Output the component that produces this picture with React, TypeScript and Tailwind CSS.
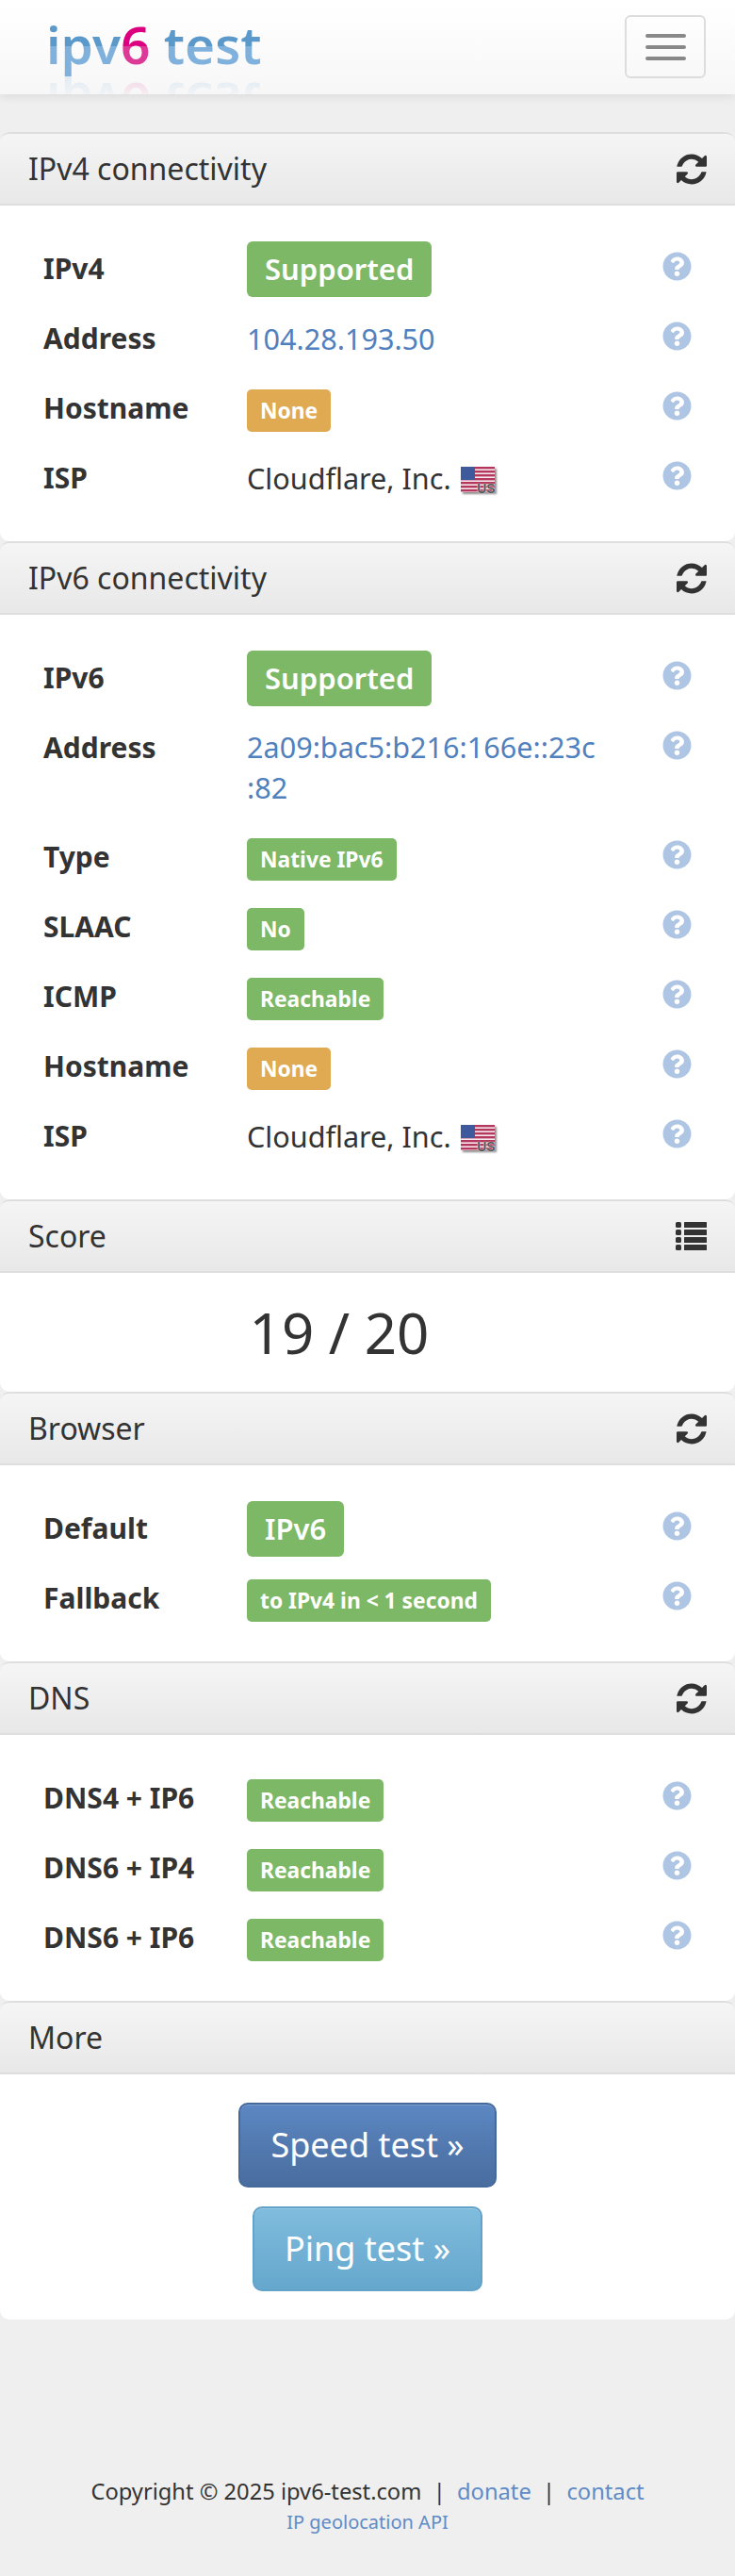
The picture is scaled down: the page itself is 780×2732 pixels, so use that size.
import { FaQuestionCircle } from "react-icons/fa";

const green = "bg-[#7db866]";
const orange = "bg-[#dfaa52]";

function RefreshIcon() {
  return (
    <svg viewBox="128 128 1536 1536" className="h-[33px] w-[32px] fill-[#333]">
      <path d="M1639 1056q0 5-1 7-64 268-268 434.5t-478 166.5q-146 0-282.5-55t-243.5-157l-129 129q-19 19-45 19t-45-19-19-45v-448q0-26 19-45t45-19h448q26 0 45 19t19 45-19 45l-137 137q71 66 161 102t187 36q134 0 250-65t186-179q11-17 53-117 8-23 30-23h192q13 0 22.5 9.5t9.5 22.5zm25-800v448q0 26-19 45t-45 19h-448q-26 0-45-19t-19-45 19-45l138-138q-148-137-349-137-134 0-250 65t-186 179q-11 17-53 117-8 23-30 23h-199q-13 0-22.5-9.5t-9.5-22.5v-7q65-268 270-434.5t480-166.5q146 0 284 55.5t245 156.5l130-129q19-19 45-19t45 19 19 45z" />
    </svg>
  );
}

function ListIcon() {
  return (
    <svg viewBox="0 0 33 30" className="h-[30px] w-[33px] fill-[#333]">
      {[0, 8, 16, 24].map((y) => (
        <g key={y}>
          <rect x="0" y={y} width="6" height="6" rx="1.5" />
          <rect x="9" y={y} width="24" height="6" rx="0.5" />
        </g>
      ))}
    </svg>
  );
}

function Flag() {
  return (
    <span className="relative ml-[10px] inline-block h-[27px] w-[36px] align-[-3px] shadow-[2px_2px_2px_rgba(0,0,0,0.45)]">
      <svg viewBox="0 0 36 27" className="block h-full w-full">
        <rect width="36" height="27" fill="#f3e9ee" />
        {[0, 4, 8, 12, 16, 20, 24].map((y) => (
          <rect key={y} y={y} width="36" height="2.4" fill="#b5375c" />
        ))}
        <rect width="15" height="14" fill="#3f5a9c" />
      </svg>
      <span className="absolute right-[-1px] bottom-[-3px] font-['Liberation_Sans',sans-serif] text-[14px] leading-none font-bold text-[#555] [text-shadow:0_0_1px_#fff,0_0_1px_#fff]">
        US
      </span>
    </span>
  );
}

function Badge({ text, big, color }: { text: string; big?: boolean; color?: string }) {
  if (big) {
    return (
      <span className={`-mt-[7px] -mb-[8px] block w-fit rounded-[6px] ${green} px-[19px] py-[8px] text-[31px] leading-[43px] font-semibold text-white`}>
        {text}
      </span>
    );
  }
  return (
    <span className={`mt-[2px] -mb-[3px] block w-fit rounded-[5px] ${color ?? green} px-[14px] py-[8px] text-[22.8px] leading-[29px] font-bold text-white`}>
      {text}
    </span>
  );
}

function Row({ label, children }: { label: string; children: React.ReactNode }) {
  return (
    <div className="flex items-start py-[15px]">
      <div className="w-[216px] shrink-0 text-[30px] leading-[44px] font-bold text-[#333]">{label}</div>
      <div className="w-[376px] shrink-0 text-[30.6px] leading-[44px] text-[#333]">{children}</div>
      <FaQuestionCircle className="mt-[4px] ml-[65px] shrink-0 text-[#aec6e4]" size={31} />
    </div>
  );
}

function Panel({
  title,
  icon,
  children,
}: {
  title: string;
  icon?: "sync" | "list";
  children: React.ReactNode;
}) {
  return (
    <section className="rounded-[10px] bg-white">
      <header className="flex h-[78px] items-center justify-between rounded-t-[10px] border-y-[2px] border-[#dedede] bg-gradient-to-b from-[#f5f5f5] to-[#e8e8e8] pr-[30px] pl-[30px]">
        <h2 className="text-[32px] leading-[44px] font-normal text-[#333]">{title}</h2>
        {icon === "sync" && <RefreshIcon />}
        {icon === "list" && <ListIcon />}
      </header>
      {children}
    </section>
  );
}

const Rows = ({ children }: { children: React.ReactNode }) => (
  <div className="flex flex-col py-[30px] pl-[46px]">{children}</div>
);

export default function App() {
  return (
    <div className="flex min-h-[2732px] flex-col bg-[#efefef] font-['Noto_Sans',sans-serif]">
      <nav className="flex h-[100px] items-start justify-between overflow-hidden bg-gradient-to-b from-white to-[#f7f7f7] shadow-[0_3px_9px_rgba(0,0,0,0.08)]">
        <div className="mt-[11px] ml-[49px] text-[55px] leading-[72px] font-semibold [-webkit-box-reflect:below_-10px_linear-gradient(transparent_55%,rgba(255,255,255,0.25))]">
          <span className="bg-gradient-to-b from-[#5c99cb] from-[54%] to-[#7fb1dc] to-[54%] bg-clip-text text-transparent">ipv</span>
          <span className="bg-gradient-to-b from-[#dc0080] from-[54%] to-[#dd3a98] to-[54%] bg-clip-text text-transparent">6</span>
          <span className="bg-gradient-to-b from-[#5c99cb] from-[54%] to-[#7fb1dc] to-[54%] bg-clip-text text-transparent"> test</span>
        </div>
        <button className="mt-[16px] mr-[31px] flex h-[67px] w-[86px] flex-col items-center justify-center gap-[8px] rounded-[6px] border-[2px] border-[#dddddd]">
          <span className="h-[4px] w-[43px] rounded-[2px] bg-[#888888]" />
          <span className="h-[4px] w-[43px] rounded-[2px] bg-[#888888]" />
          <span className="h-[4px] w-[43px] rounded-[2px] bg-[#888888]" />
        </button>
      </nav>

      <main className="mt-[40px]">
        <Panel title="IPv4 connectivity" icon="sync">
          <Rows>
            <Row label="IPv4"><Badge text="Supported" big /></Row>
            <Row label="Address"><a className="text-[#5080bd]">104.28.193.50</a></Row>
            <Row label="Hostname"><Badge text="None" color={orange} /></Row>
            <Row label="ISP">Cloudflare, Inc.<Flag /></Row>
          </Rows>
        </Panel>
        <Panel title="IPv6 connectivity" icon="sync">
          <Rows>
            <Row label="IPv6"><Badge text="Supported" big /></Row>
            <Row label="Address">
              <a className="block leading-[43px] whitespace-nowrap text-[#5080bd]">
                2a09:bac5:b216:166e::23c
                <br />
                :82
              </a>
            </Row>
            <Row label="Type"><Badge text="Native IPv6" /></Row>
            <Row label="SLAAC"><Badge text="No" /></Row>
            <Row label="ICMP"><Badge text="Reachable" /></Row>
            <Row label="Hostname"><Badge text="None" color={orange} /></Row>
            <Row label="ISP">Cloudflare, Inc.<Flag /></Row>
          </Rows>
        </Panel>
        <Panel title="Score" icon="list">
          <div className="py-[33px] pr-[60px] text-center text-[60px] leading-[60px] text-[#333]">19 / 20</div>
        </Panel>
        <Panel title="Browser" icon="sync">
          <Rows>
            <Row label="Default"><Badge text="IPv6" big /></Row>
            <Row label="Fallback"><Badge text="to IPv4 in < 1 second" /></Row>
          </Rows>
        </Panel>
        <Panel title="DNS" icon="sync">
          <Rows>
            <Row label="DNS4 + IP6"><Badge text="Reachable" /></Row>
            <Row label="DNS6 + IP4"><Badge text="Reachable" /></Row>
            <Row label="DNS6 + IP6"><Badge text="Reachable" /></Row>
          </Rows>
        </Panel>
        <Panel title="More">
          <div className="flex flex-col items-center gap-[20px] py-[30px]">
            <a className="rounded-[10px] border-[2px] border-[#466a9c] bg-gradient-to-b from-[#5c87c2] to-[#496d9f] px-[32px] py-[19px] text-[36px] leading-[48px] text-white shadow-[inset_0_1px_0_rgba(255,255,255,0.2)]">Speed test »</a>
            <a className="rounded-[10px] border-[2px] border-[#64a3c9] bg-gradient-to-b from-[#80bcdd] to-[#65a7cd] px-[32px] py-[19px] text-[36px] leading-[48px] text-white shadow-[inset_0_1px_0_rgba(255,255,255,0.2)]">Ping test »</a>
          </div>
        </Panel>
      </main>

      <footer className="mt-[165px] text-center text-[#333]">
        <div className="text-[23.7px] leading-[34px]">
          Copyright © 2025 ipv6-test.com &nbsp;|&nbsp; <a className="text-[#5f8bc6]">donate</a> &nbsp;|&nbsp; <a className="text-[#5f8bc6]">contact</a>
        </div>
        <a className="block text-[20px] leading-[32px] text-[#5f8bc6]">IP geolocation API</a>
      </footer>
    </div>
  );
}
